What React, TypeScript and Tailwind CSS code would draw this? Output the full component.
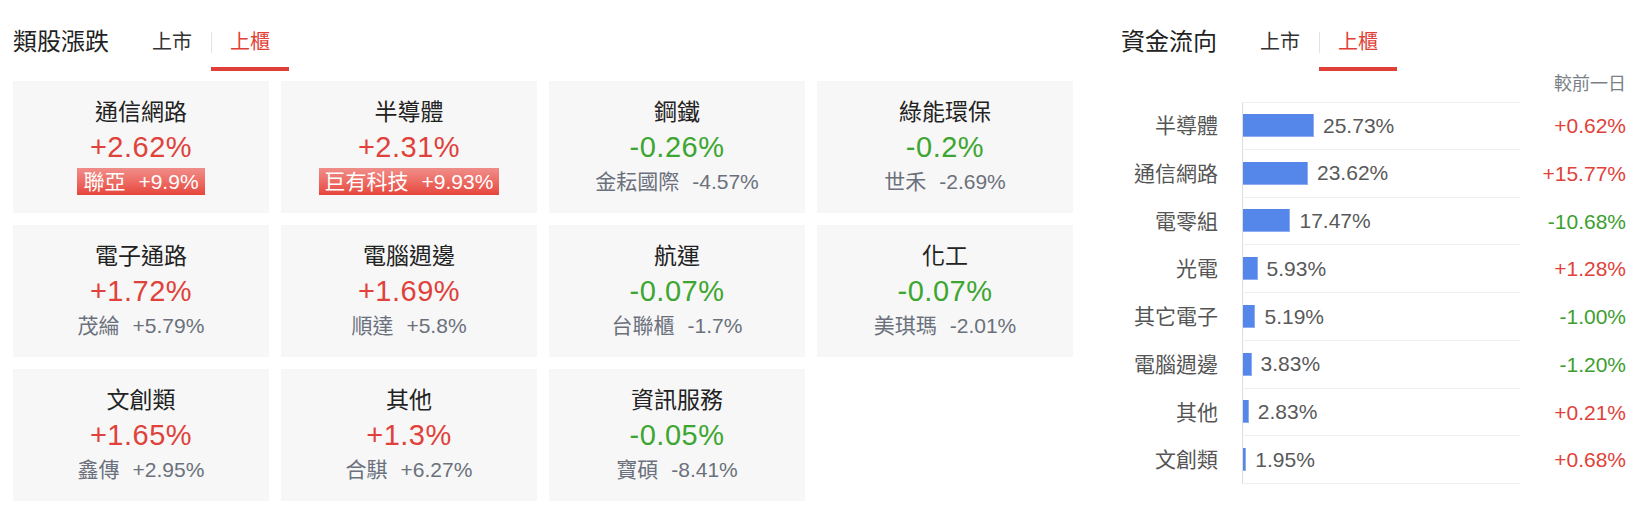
import React from 'react';

interface SectorCard {
  name: string;
  pct: string;
  stock: string;
  chg: string;
  hot?: boolean;
}

interface FlowRow {
  name: string;
  share: number;
  diff: string;
}

const sectors: SectorCard[] = [
  { name: '通信網路', pct: '+2.62%', stock: '聯亞', chg: '+9.9%', hot: true },
  { name: '半導體', pct: '+2.31%', stock: '巨有科技', chg: '+9.93%', hot: true },
  { name: '鋼鐵', pct: '-0.26%', stock: '金耘國際', chg: '-4.57%' },
  { name: '綠能環保', pct: '-0.2%', stock: '世禾', chg: '-2.69%' },
  { name: '電子通路', pct: '+1.72%', stock: '茂綸', chg: '+5.79%' },
  { name: '電腦週邊', pct: '+1.69%', stock: '順達', chg: '+5.8%' },
  { name: '航運', pct: '-0.07%', stock: '台聯櫃', chg: '-1.7%' },
  { name: '化工', pct: '-0.07%', stock: '美琪瑪', chg: '-2.01%' },
  { name: '文創類', pct: '+1.65%', stock: '鑫傳', chg: '+2.95%' },
  { name: '其他', pct: '+1.3%', stock: '合騏', chg: '+6.27%' },
  { name: '資訊服務', pct: '-0.05%', stock: '寶碩', chg: '-8.41%' },
];

const flows: FlowRow[] = [
  { name: '半導體', share: 25.73, diff: '+0.62%' },
  { name: '通信網路', share: 23.62, diff: '+15.77%' },
  { name: '電零組', share: 17.47, diff: '-10.68%' },
  { name: '光電', share: 5.93, diff: '+1.28%' },
  { name: '其它電子', share: 5.19, diff: '-1.00%' },
  { name: '電腦週邊', share: 3.83, diff: '-1.20%' },
  { name: '其他', share: 2.83, diff: '+0.21%' },
  { name: '文創類', share: 1.95, diff: '+0.68%' },
];

const FONT = "font-['Liberation_Sans','Noto_Sans_CJK_TC',sans-serif]";

function SectionHeader({ title }: { title: string }) {
  return (
    <div className="flex h-[71px]">
      <div className="flex items-center pt-[17px] border-b-4 border-transparent text-[24px] text-[#222] mr-[24px]">
        {title}
      </div>
      <div className="flex items-center pt-[17px] border-b-4 border-transparent px-[19px] text-[20px] text-[#333]">
        上市
      </div>
      <div className="w-px h-[21px] mt-[32px] bg-[#e3e3e3]" />
      <div className="flex items-center pt-[17px] border-b-4 border-[#df3f37] px-[19px] -ml-px text-[20px] text-[#df3f37]">
        上櫃
      </div>
    </div>
  );
}

function Card({ item }: { item: SectorCard }) {
  const up = item.pct.startsWith('+');
  return (
    <div className="h-[132px] bg-[#f7f7f7] flex flex-col items-center pt-[16px]">
      <div className="text-[23px] leading-[30px] text-[#222]">{item.name}</div>
      <div
        className={`mt-[3px] text-[29px] leading-[34px] tracking-[0.5px] ${up ? 'text-[#e0423b]' : 'text-[#3da631]'}`}
      >
        {item.pct}
      </div>
      {item.hot ? (
        <div className="mt-[4px] h-[27px] px-[6px] flex items-center bg-linear-to-b from-[#f08d89] to-[#e6443c] text-white text-[21px] leading-[27px]">
          <span>{item.stock}</span>
          <span className="ml-[13px]">{item.chg}</span>
        </div>
      ) : (
        <div className="mt-[4px] h-[27px] flex items-center text-[21px] leading-[27px] text-[#6b717c]">
          <span>{item.stock}</span>
          <span className="ml-[13px]">{item.chg}</span>
        </div>
      )}
    </div>
  );
}

function FlowChart() {
  return (
    <div className="flex flex-col">
      <div className="h-[24px] mt-[1px] text-right text-[18px] leading-[24px] text-[#7a7f87]">較前一日</div>
      <div className="mt-[6px] flex flex-col">
        {flows.map((row, i) => {
          const up = row.diff.startsWith('+');
          const barW = Math.max(3, row.share * 2.85 - 2.3);
          return (
            <div key={row.name} className="flex h-[47.75px] items-stretch">
              <div className="w-[121px] pr-[24px] flex items-center justify-end text-[21px] text-[#555]">
                {row.name}
              </div>
              <div
                className={`w-[278px] flex items-center border-l border-l-[#dddddd] border-b border-b-[#efefef] ${i === 0 ? 'border-t border-t-[#efefef]' : ''}`}
              >
                <div className="h-[23px] bg-[#5586ea] border-r border-b border-[#8eadf0]" style={{ width: barW }} />
                <span className="ml-[9px] text-[21px] text-[#595959]">{row.share.toFixed(2)}%</span>
              </div>
              <div
                className={`flex-1 flex items-center justify-end text-[21px] ${up ? 'text-[#e0423b]' : 'text-[#3d9e2f]'}`}
              >
                {row.diff}
              </div>
            </div>
          );
        })}
      </div>
    </div>
  );
}

export default function App() {
  return (
    <div className={`${FONT} w-[1646px] h-[508px] bg-white flex pl-[13px] pr-[20px]`}>
      <div className="w-[1060px] flex flex-col">
        <SectionHeader title="類股漲跌" />
        <div className="mt-[10px] grid grid-cols-4 gap-[12px]">
          {sectors.map((s) => (
            <Card key={s.name} item={s} />
          ))}
        </div>
      </div>
      <div className="ml-[48px] flex-1 flex flex-col">
        <SectionHeader title="資金流向" />
        <FlowChart />
      </div>
    </div>
  );
}
